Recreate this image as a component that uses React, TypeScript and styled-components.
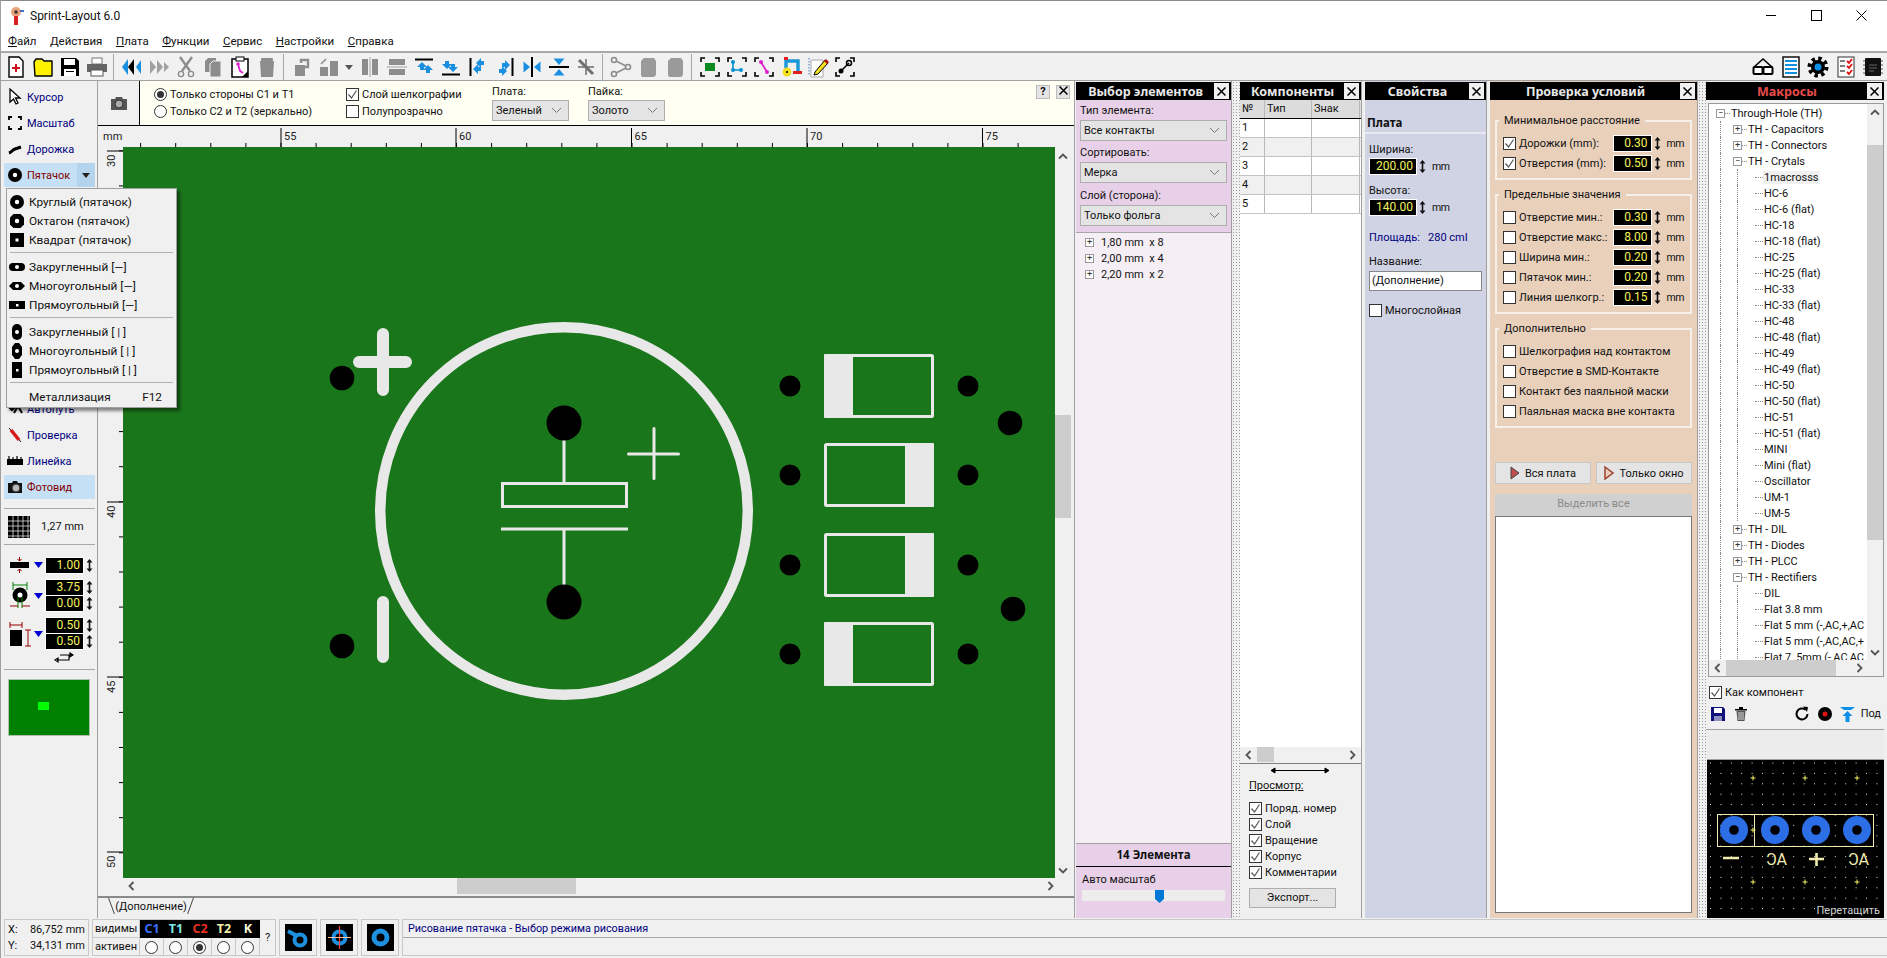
import React from 'react';
import styled, { createGlobalStyle } from 'styled-components';

const Global = createGlobalStyle`
  html, body { margin: 0; padding: 0; background: #f0f0f0; overflow: hidden; }
  * { box-sizing: border-box; }
  body { font: 11px Roboto, Tahoma, sans-serif; color: #111; }
`;

const HEAD_FONT = '"Noto Sans", Tahoma, sans-serif';

const Window = styled('div')`
  position: relative;
  width: 1887px;
  height: 958px;
  overflow: hidden;
  display: flex;
  flex-direction: column;
  background: #f0f0f0;
  border-top: 1px solid #8a8a8a;
  border-left: 1px solid #a0a0a0;
`;

const TitleBar = styled('div')`
  height: 29px;
  background: #fff;
  display: flex;
  align-items: center;
  padding-left: 8px;
  font-size: 12px;
  gap: 5px;
`;
const WinButtons = styled('div')`
  margin-left: auto;
  display: flex;
  align-items: center;
  margin-right: 3px;
`;
const WinButton = styled('div')`
  width: 45px;
  height: 29px;
  display: flex;
  align-items: center;
  justify-content: center;
`;
const MenuBar = styled('div')`
  height: 21px;
  background: #fff;
  display: flex;
  align-items: center;
  padding-left: 7px;
  gap: 13.5px;
  font-size: 11.5px;
  u { text-decoration: underline; text-underline-offset: 1px; }
`;
const Toolbar = styled('div')`
  height: 30px;
  border-top: 2px solid #a9a9a9;
  border-bottom: 1px solid #a0a0a0;
  display: flex;
  align-items: center;
  padding-left: 1px;
  background: #f1f1f1;
`;
const ToolButton = styled('div')<{ $narrow?: boolean }>`
  width: ${(p) => (p.$narrow ? 14 : 27)}px;
  height: 24px;
  display: flex;
  align-items: center;
  justify-content: center;
  flex: none;
`;
const ToolSep = styled('div')`
  width: 1px;
  height: 26px;
  margin: 0 4px 0 3px;
  background: #a8a8a8;
  flex: none;
`;
const ToolRight = styled('div')`
  margin-left: auto;
  display: flex;
  align-items: center;
  gap: 5.5px;
  margin-right: 3px;
`;
const Main = styled('div')`
  height: 837px;
  display: flex;
`;

/* left tool column */
const LeftCol = styled('div')`
  width: 97px;
  flex: none;
  border-right: 1px solid #a0a0a0;
  padding: 4px 2px 0 3px;
  display: flex;
  flex-direction: column;
`;
const ToolRow = styled('div')<{ $active?: boolean; $gap?: number }>`
  height: 24px;
  margin-bottom: 2px;
  margin-top: ${(p) => p.$gap || 0}px;
  display: flex;
  align-items: center;
  gap: 4px;
  padding-left: 3px;
  font-size: 11px;
  color: ${(p) => (p.$active ? '#800000' : '#000080')};
  background: ${(p) => (p.$active ? '#c5dff4' : 'transparent')};
`;
const ToolDrop = styled('div')`
  margin-left: auto;
  width: 18px;
  height: 100%;
  background: #b4d3ec;
  display: flex;
  align-items: center;
  justify-content: center;
`;
const Divider = styled('div')<{ $m?: string }>`
  height: 1px;
  background: #a8a8a8;
  margin: ${(p) => p.$m || '0'};
`;
const GridRow = styled('div')`
  height: 35px;
  display: flex;
  align-items: center;
  gap: 11px;
  padding-left: 4px;
`;
const ParamRow = styled('div')<{ $mt: number; $h?: number }>`
  display: flex;
  align-items: center;
  margin-top: ${(p) => p.$mt}px;
  height: ${(p) => p.$h || 16}px;
`;
const ParamIcon = styled('div')`
  width: 42px;
  display: flex;
  align-items: center;
`;
const ParamFields = styled('div')`
  display: flex;
  flex-direction: column;
  gap: 1px;
`;
const FieldLine = styled('div')`
  display: flex;
  align-items: center;
  gap: 3px;
`;
const NumField = styled('div')<{ $w?: number }>`
  width: ${(p) => p.$w || 37}px;
  flex: none;
  height: 15px;
  background: #000;
  color: #f4f45a;
  text-align: right;
  padding-right: 3px;
  font-size: 12px;
  line-height: 15px;
  outline: 1px solid #fff;
`;
const SwapRow = styled('div')`
  height: 14px;
  margin-top: 3px;
  padding-left: 50px;
`;
const Preview = styled('div')`
  margin: 9px 0 0 4px;
  width: 82px;
  height: 57px;
  background: #008000;
  border: 1px solid #b0c0b0;
  display: flex;
  align-items: center;
  justify-content: center;
`;
const PreviewDot = styled('div')`
  width: 11px;
  height: 8px;
  background: #00ff00;
  margin: 0 12px 4px 0;
`;

/* centre */
const Centre = styled('div')`
  width: 977px;
  flex: none;
  display: flex;
  flex-direction: column;
  border-right: 1px solid #a0a0a0;
`;
const OptionsBar = styled('div')`
  height: 45px;
  background: #fffff3;
  border-bottom: 1px solid #000;
  display: flex;
  align-items: stretch;
`;
const CameraCell = styled('div')`
  width: 42px;
  background: #f0f0f0;
  border-right: 1px solid #000;
  display: flex;
  align-items: center;
  justify-content: center;
`;
const OptCol = styled('div')<{ $w: number; $pl?: number }>`
  width: ${(p) => p.$w}px;
  padding-left: ${(p) => p.$pl || 0}px;
  display: flex;
  flex-direction: column;
  justify-content: center;
  gap: 3px;
`;
const OptSelectCol = styled('div')`
  width: 96px;
  display: flex;
  flex-direction: column;
  padding-top: 4px;
`;
const OptLine = styled('label')`
  display: flex;
  align-items: center;
  gap: 3px;
  height: 14px;
  white-space: nowrap;
`;
const OptClose = styled('div')`
  margin-left: auto;
  margin-top: 4px;
  margin-right: 4px;
  display: flex;
  gap: 6px;
`;
const SmallBtn = styled('div')`
  width: 14px;
  height: 14px;
  background: #e4e4e4;
  border: 1px solid #bbb;
  font-size: 11px;
  font-weight: 700;
  line-height: 12px;
  text-align: center;
`;
const Mark = styled('span')`
  width: 13px;
  height: 13px;
  flex: none;
  border: 1px solid #333;
  background: #fff;
  display: inline-flex;
  align-items: center;
  justify-content: center;
`;
const Radio = styled('span')<{ $on?: boolean }>`
  width: 13px;
  height: 13px;
  flex: none;
  border-radius: 50%;
  border: 1px solid #333;
  background: #fff;
  display: inline-flex;
  align-items: center;
  justify-content: center;
  &::after {
    content: '';
    width: 7px;
    height: 7px;
    border-radius: 50%;
    background: ${(p) => (p.$on ? '#333' : 'transparent')};
  }
`;
const SelectBox = styled('div')<{ $w?: number; $mt?: number }>`
  width: ${(p) => (p.$w ? `${p.$w}px` : 'auto')};
  height: 21px;
  margin-top: ${(p) => p.$mt || 0}px;
  background: #e4e4e4;
  border: 1px solid #adadad;
  display: flex;
  align-items: center;
  padding: 0 6px 0 3px;
  justify-content: space-between;
`;
const RulerRow = styled('div')`
  height: 21px;
  flex: none;
`;
const CanvasRow = styled('div')`
  height: 731px;
  display: flex;
`;
const VScroll = styled('div')`
  width: 20px;
  background: #f0f0f0;
  display: flex;
  flex-direction: column;
  align-items: flex-start;
  padding-top: 1px;
`;
const ScrollArrow = styled('div')<{ $w?: number; $ml?: number; $auto?: boolean }>`
  width: ${(p) => p.$w || 16}px;
  height: 16px;
  margin-left: ${(p) => p.$ml || 0}px;
  margin-top: ${(p) => (p.$auto ? 'auto' : '0')};
  display: flex;
  align-items: center;
  justify-content: center;
  flex: none;
`;
const VThumb = styled('div')`
  width: 16px;
  height: 103px;
  margin-top: 251px;
  margin-bottom: auto;
  background: #cdcdcd;
`;
const HScroll = styled('div')`
  height: 20px;
  display: flex;
  align-items: flex-start;
  padding-left: 25px;
  border-bottom: 2px solid #8a8a8a;
  flex: none;
`;
const HThumb = styled('div')<{ $w: number; $ml: number; $h?: number }>`
  width: ${(p) => p.$w}px;
  height: ${(p) => p.$h || 16}px;
  margin-left: ${(p) => p.$ml}px;
  background: #cdcdcd;
  flex: none;
`;
const TabRow = styled('div')`
  height: 19px;
  padding-left: 11px;
  display: flex;
  align-items: flex-start;
`;
const TabLabel = styled('div')`
  position: relative;
  width: 84px;
  height: 16px;
  text-align: center;
  line-height: 18px;
  font-size: 11px;
  &::before, &::after {
    content: '';
    position: absolute;
    top: 0;
    bottom: 0;
    width: 1px;
    background: #444;
  }
  &::before { left: 2px; transform: skewX(20deg); }
  &::after { right: 2px; transform: skewX(-20deg); }
`;

/* panels */
const StripDots = styled('div')`
  width: 8px;
  flex: none;
  background-image: radial-gradient(#9a9a9a 0.7px, transparent 0.8px);
  background-size: 3px 3px;
`;
const Panel = styled('div')<{ $w: number; $ml?: number; $bg?: string; $last?: boolean }>`
  width: ${(p) => p.$w}px;
  flex: none;
  margin-left: ${(p) => p.$ml || 0}px;
  background: ${(p) => p.$bg || '#f0f0f0'};
  border-right: ${(p) => (p.$last ? 'none' : '1px solid #a0a0a0')};
  display: flex;
  flex-direction: column;
  height: 837px;
`;
const PanelHead = styled('div')<{ $c?: string }>`
  flex: none;
  height: 18px;
  margin-top: 1px;
  background: #000;
  color: ${(p) => p.$c || '#e8e8e8'};
  font: 700 12.5px ${HEAD_FONT};
  display: flex;
  align-items: center;
  justify-content: center;
  position: relative;
  padding-right: 16px;
  white-space: nowrap;
`;
const HeadClose = styled('div')`
  position: absolute;
  right: 2px;
  top: 1px;
  width: 15px;
  height: 16px;
  background: #f0f0f0;
  display: flex;
  align-items: center;
  justify-content: center;
`;
const PinkTop = styled('div')`
  height: 133px;
  background: #e8d1e8;
  border-bottom: 1px solid #a8a8a8;
  padding: 2px 4px 0 4px;
  flex: none;
  line-height: 17px;
`;
const PinkLabel = styled('div')<{ $mt: number }>`
  margin-top: ${(p) => p.$mt}px;
`;
const PinkList = styled('div')`
  flex: 1;
  background: #f5eef5;
  padding-top: 1px;
`;
const SizeRow = styled('div')`
  height: 16px;
  display: flex;
  align-items: center;
  padding-left: 9px;
  gap: 7px;
`;
const SizeText = styled('span')`
  white-space: pre;
`;
const PlusBox = styled('span')`
  width: 9px;
  height: 9px;
  flex: none;
  border: 1px solid #999;
  background: #fff;
  font-size: 9px;
  line-height: 7px;
  text-align: center;
  color: #333;
`;
const PinkCount = styled('div')`
  height: 24px;
  border-top: 1px solid #a0a0a0;
  border-bottom: 1px solid #000;
  background: #e8d1e8;
  text-align: center;
  font: 700 11.5px/22px ${HEAD_FONT};
  flex: none;
`;
const PinkZoom = styled('div')`
  height: 51px;
  background: #e8d1e8;
  flex: none;
  padding: 6px 6px;
`;
const Slider = styled('div')`
  margin-top: 4px;
  height: 11px;
  background: #ededed;
  display: flex;
  align-items: stretch;
`;
const SliderThumb = styled('div')`
  width: 9px;
  height: 13px;
  margin-left: 73px;
  background: #0078d7;
  clip-path: polygon(0 0, 100% 0, 100% 70%, 50% 100%, 0 70%);
`;

const TableHead = styled('div')`
  display: grid;
  grid-template-columns: 25px 47px 48px;
  height: 19px;
  background: #dcdcdc;
  border-bottom: 1px solid #000;
  line-height: 18px;
  flex: none;
`;
const Cell = styled('div')`
  padding-left: 2px;
  border-right: 1px solid #b8b8b8;
`;
const TableRow = styled('div')<{ $alt: boolean }>`
  display: grid;
  grid-template-columns: 25px 47px 48px;
  height: 19px;
  background: ${(p) => (p.$alt ? '#f0f0f0' : '#fff')};
  border-bottom: 1px solid #c4c4c4;
  line-height: 18px;
  flex: none;
`;
const TableFill = styled('div')`
  flex: 1;
  background: #fff;
`;
const HScrollSmall = styled('div')`
  height: 17px;
  flex: none;
  border-bottom: 1px solid #808080;
  display: flex;
  align-items: flex-start;
`;
const ViewBox = styled('div')`
  height: 154px;
  flex: none;
  padding: 2px 0 0 9px;
`;
const ViewTitle = styled('div')`
  text-decoration: underline;
  margin: 4px 0 8px;
`;
const CheckLine = styled('div')`
  height: 16px;
  display: flex;
  align-items: center;
  gap: 3px;
  white-space: nowrap;
`;
const PlainBtn = styled('div')`
  width: 87px;
  height: 20px;
  margin-top: 8px;
  background: #e4e4e4;
  border: 1px solid #adadad;
  text-align: center;
  line-height: 17px;
  word-spacing: 1px;
`;

const PropTitle = styled('div')`
  height: 34px;
  padding: 16px 0 0 2px;
  font: 700 11.5px/14px ${HEAD_FONT};
  border-bottom: 2px solid #e8e8f0;
  flex: none;
`;
const PropLabel = styled('div')<{ $mt: number; $c?: string }>`
  margin: ${(p) => p.$mt}px 0 0 4px;
  line-height: 15px;
  color: ${(p) => p.$c || '#111'};
  white-space: pre;
`;
const PropValue = styled('div')`
  display: flex;
  align-items: center;
  margin: 2px 0 0 5px;
  gap: 3px;
  height: 14px;
  span { margin-left: 3px; font-size: 10.5px; letter-spacing: -0.5px; }
`;
const NameInput = styled('div')`
  margin: 2px 4px 0 4px;
  height: 20px;
  background: #fff;
  border: 1px solid #888;
  line-height: 18px;
  padding-left: 2px;
`;
const PropCheck = styled('div')`
  display: flex;
  align-items: center;
  gap: 3px;
  margin: 13px 0 0 4px;
`;

const CheckBody = styled('div')`
  flex: 1;
  display: flex;
  flex-direction: column;
  padding: 14px 5px 5px 5px;
`;
const Group = styled('fieldset')`
  margin: 0 0 8px 0;
  padding: 5px 5px 5px 6px;
  border: 2px solid #f6f0ea;
  outline: none;
  min-width: 0;
  legend {
    margin-left: -4px;
    padding: 0 5px;
    line-height: 14px;
    font-size: 11px;
  }
`;
const CheckRow = styled('div')`
  height: 20px;
  display: flex;
  align-items: center;
  gap: 3px;
  white-space: nowrap;
  b { margin-left: auto; font-weight: 400; display: flex; align-items: center; gap: 3px; }
  i { font-style: normal; margin-left: 3px; margin-right: 1px; font-size: 10.5px; letter-spacing: -0.5px; }
`;
const RunRow = styled('div')`
  display: flex;
  gap: 5px;
  margin-top: 26px;
`;
const RunBtn = styled('div')`
  flex: 1;
  height: 22px;
  background: #e4e4e4;
  border: 1px solid #c8c8c8;
  display: flex;
  align-items: center;
  justify-content: center;
  gap: 5px;
`;
const SelectAll = styled('div')`
  height: 22px;
  margin-top: 10px;
  background: #d0d0d0;
  color: #8a8a8a;
  text-align: center;
  line-height: 20px;
  flex: none;
`;
const WhiteList = styled('div')`
  flex: 1;
  background: #fff;
  border: 1px solid #777;
`;

const TreeBox = styled('div')`
  height: 574px;
  margin: 3px 0 0 2px;
  background: #fff;
  border: 1px solid #9a9a9a;
  overflow: hidden;
  flex: none;
  display: flex;
  flex-direction: column;
`;
const TreeInner = styled('div')`
  flex: 1;
  min-height: 0;
  display: flex;
`;
const TreeList = styled('div')`
  flex: 1;
  min-width: 0;
  overflow: hidden;
  padding: 1px 0 0 7px;
`;
const TreeRow = styled('div')`
  height: 16px;
  display: flex;
  align-items: center;
  white-space: nowrap;
`;
const Guide = styled('span')<{ $w: number; $ml?: number }>`
  width: ${(p) => p.$w}px;
  margin-left: ${(p) => p.$ml || 0}px;
  height: 16px;
  flex: none;
  border-left: 1px dotted #888;
`;
const Stub = styled('span')<{ $w: number }>`
  width: ${(p) => p.$w}px;
  flex: none;
  border-top: 1px dotted #888;
`;
const TreeLabel = styled('span')<{ $sel?: boolean }>`
  background: ${(p) => (p.$sel ? '#f0f0f0' : 'transparent')};
  padding: 0 1px;
`;
const TreeScroll = styled('div')`
  width: 16px;
  flex: none;
  background: #f0f0f0;
  display: flex;
  flex-direction: column;
`;
const TreeThumb = styled('div')`
  margin-top: 25px;
  height: 395px;
  background: #cdcdcd;
`;
const TreeHScroll = styled('div')`
  height: 16px;
  background: #f0f0f0;
  flex: none;
  display: flex;
  align-items: center;
`;
const AsComponent = styled('div')`
  display: flex;
  align-items: center;
  gap: 3px;
  margin: 8px 0 0 3px;
  height: 15px;
  flex: none;
`;
const MacroTools = styled('div')`
  display: flex;
  align-items: center;
  margin-top: 1px;
  padding-left: 4px;
  padding-bottom: 3px;
  flex: none;
  border-bottom: 1px solid #a0a0a0;
  height: 29px;
`;
const MacroGap = styled('span')`
  width: 8px;
`;
const MacroPush = styled('div')`
  margin-left: auto;
  display: flex;
  align-items: center;
  gap: 8px;
  padding-right: 3px;
`;
const PushLabel = styled('span')`
  margin-left: -3px;
`;
const GreyStrip = styled('div')`
  height: 30px;
  flex: none;
  margin-left: 1px;
  border-bottom: 1px solid #a0a0a0;
  background: #ececec;
`;
const PreviewBlack = styled('div')`
  flex: 1;
  margin-left: 1px;
  background: #000;
  position: relative;
  overflow: hidden;
`;
const DragHint = styled('div')`
  position: absolute;
  right: 4px;
  bottom: 1px;
  color: #d0d0d0;
  font-size: 11px;
`;

/* status bar */
const StatusBar = styled('div')`
  flex: 1;
  display: flex;
  padding: 1px 0 0 3px;
  gap: 3px;
`;
const CoordBox = styled('div')`
  width: 85px;
  height: 37px;
  border: 1px solid #c8c8c8;
  padding: 2px 3px;
  line-height: 16px;
  font-size: 11px;
  span { display: flex; justify-content: space-between; }
  i { font-style: normal; }
`;
const LayerBox = styled('div')`
  width: 184px;
  height: 37px;
  border: 1px solid #c8c8c8;
  display: grid;
  grid-template-columns: 47px repeat(5, 24px) 1fr;
  grid-template-rows: 18px 18px;
  line-height: 17px;
  font-size: 11px;
`;
const LayerName = styled('div')<{ $last?: boolean }>`
  padding-left: 2px;
  border-right: 1px solid #c8c8c8;
  border-bottom: ${(p) => (p.$last ? 'none' : '1px solid #c8c8c8')};
`;
const LayerCell = styled('div')<{ $c: string }>`
  background: #000;
  color: ${(p) => p.$c};
  text-align: center;
  font: 700 12.5px/17px ${HEAD_FONT};
`;
const LayerRadio = styled('div')`
  display: flex;
  align-items: center;
  justify-content: center;
  border-right: 1px solid #c8c8c8;
`;
const LayerHelp = styled('div')`
  grid-column: 7;
  grid-row: 1 / 3;
  text-align: center;
  line-height: 36px;
`;
const SnapBox = styled('div')`
  width: 38px;
  height: 37px;
  border: 1px solid #c8c8c8;
  display: flex;
  align-items: center;
  justify-content: center;
`;
const MessageBox = styled('div')`
  flex: 1;
  height: 37px;
  border: 1px solid #c8c8c8;
  border-right: none;
  color: #000080;
  font-size: 10.8px;
`;
const MessageText = styled('div')`
  height: 18px;
  padding-left: 5px;
  line-height: 18px;
  border-bottom: 1px solid #a8a8a8;
`;

/* popup */
const PopMenu = styled('div')`
  position: absolute;
  left: 5px;
  top: 187px;
  width: 171px;
  height: 220px;
  background: #f0f0f0;
  border: 1px solid #a0a0a0;
  box-shadow: 3px 3px 3px rgba(0, 0, 0, 0.45);
  padding: 3px 2px;
  font-size: 11.8px;
`;
const PopItem = styled('div')`
  height: 19px;
  display: flex;
  align-items: center;
`;
const PopIcon = styled('span')`
  width: 16px;
  margin-right: 4px;
  display: flex;
  align-items: center;
  justify-content: center;
  flex: none;
`;
const PopSep = styled('div')`
  height: 1px;
  background: #b0b0b0;
  margin: 3px 1px 4px 1px;
`;
const PopKey = styled('span')`
  margin-left: auto;
  margin-right: 12px;
`;

const Chevron = styled('svg')`
  width: 11px;
  height: 7px;
  flex: none;
`;
const Drawing = styled('svg')`
  display: block;
  flex: none;
`;
const BoardSvg = styled(Drawing)`
  background: #1a761a;
`;

const Ic = ({ children, w = 22, h = 22 }: { children: React.ReactNode; w?: number; h?: number }) => (
  <Drawing width={w} height={h} viewBox={`0 0 ${w} ${h}`}>
    {children}
  </Drawing>
);

const Chev = () => (
  <Chevron viewBox="0 0 11 7">
    <path d="M1 1l4.5 4.5L10 1" fill="none" stroke="#777" strokeWidth="1" />
  </Chevron>
);
const Tick = () => (
  <svg width="11" height="11" viewBox="0 0 11 11">
    <path d="M1.5 5.5l3 3.5 5-7.5" fill="none" stroke="#555" strokeWidth="1.2" />
  </svg>
);
const Box = ({ on }: { on?: boolean }) => <Mark>{on && <Tick />}</Mark>;
const Spin = () => (
  <Drawing width="7" height="13" viewBox="0 0 7 13">
    <path d="M3.5 0L6.5 3.5H4.3V9.5H6.5L3.5 13L.5 9.5H2.7V3.5H.5z" fill="#111" />
  </Drawing>
);
const CloseX = () => (
  <svg width="9" height="9" viewBox="0 0 9 9">
    <path d="M.5.5l8 8M8.5.5l-8 8" stroke="#000" strokeWidth="1.5" />
  </svg>
);
const ArrowL = () => (
  <svg width="7" height="10" viewBox="0 0 7 10"><path d="M5.5 1L1.5 5l4 4" fill="none" stroke="#555" strokeWidth="1.8" /></svg>
);
const ArrowR = () => (
  <svg width="7" height="10" viewBox="0 0 7 10"><path d="M1.5 1l4 4-4 4" fill="none" stroke="#555" strokeWidth="1.8" /></svg>
);
const ArrowU = () => (
  <svg width="10" height="7" viewBox="0 0 10 7"><path d="M1 5.5l4-4 4 4" fill="none" stroke="#555" strokeWidth="1.8" /></svg>
);
const ArrowD = () => (
  <svg width="10" height="7" viewBox="0 0 10 7"><path d="M1 1.5l4 4 4-4" fill="none" stroke="#555" strokeWidth="1.8" /></svg>
);
const BlueDrop = () => (
  <svg width="9" height="6" viewBox="0 0 9 6"><path d="M0 0h9L4.5 6z" fill="#0000d0" /></svg>
);

const G = '#8d8d8d';
const B = '#1a8fe0';
const alignIcon = (rot: number) => (
  <Ic>
    <g transform={`rotate(${rot} 11 11)`}>
      <path d="M2 3.5h18" stroke="#000" strokeWidth="2" />
      <path d="M9 6l-5 5h3v3h4v-3h3z" fill={B} />
      <path d="M15 10l-5 5h3v3h4v-3h3z" fill={B} transform="translate(0 -1)" />
    </g>
  </Ic>
);
const barsIcon = (vertical: boolean) => (
  <Ic>
    <g transform={vertical ? '' : 'rotate(90 11 11)'}>
      <path d="M11 1v20" stroke="#a0a0a0" strokeWidth="1" />
      <rect x="3" y="3" width="6" height="16" fill={G} />
      <rect x="13" y="3" width="6" height="16" fill={G} />
    </g>
  </Ic>
);
const pinch = (vertical: boolean) => (
  <Ic>
    <g transform={vertical ? 'rotate(90 11 11)' : ''}>
      <path d="M11 1v20" stroke="#000" strokeWidth="2" />
      <path d="M9 11L2.5 5.5v11zM13 11l6.5-5.5v11z" fill={B} />
    </g>
  </Ic>
);
const corners = (children: React.ReactNode) => (
  <Ic>
    <path d="M2 6V2h4M16 2h4v4M20 16v4h-4M6 20H2v-4" fill="none" stroke="#000" strokeWidth="1.6" />
    {children}
  </Ic>
);

const TOOLBAR: (React.ReactNode | null)[] = [
  <Ic key="new"><path d="M4 1h10l4 4v16H4z" fill="#fff" stroke="#000" strokeWidth="1.4" /><path d="M11 8v8M7 12h8" stroke="#d01020" strokeWidth="2" /></Ic>,
  <Ic key="open"><path d="M2 6l2-3h6l2 2h8v15H3z" fill="#fff200" stroke="#000" strokeWidth="1.4" strokeLinejoin="round" /></Ic>,
  <Ic key="save"><path d="M2 2h15l3 3v15H2z" fill="#000" /><rect x="5" y="3" width="11" height="6" fill="#fff" /><rect x="5" y="13" width="12" height="7" fill="#fff" /><rect x="7" y="15" width="8" height="1" fill="#000" /></Ic>,
  <Ic key="print"><rect x="6" y="2" width="10" height="6" fill="#fff" stroke="#777" /><rect x="1" y="8" width="20" height="8" fill="#666" /><rect x="5" y="14" width="12" height="6" fill="#fff" stroke="#555" /></Ic>,
  null,
  <Ic key="back"><path d="M7 3L1 11l6 8z" fill={B} /><path d="M13 3l-6 8 6 8z" fill="#000" /><path d="M15 11l5-7v14z" fill={B} /></Ic>,
  <Ic key="fwd"><path d="M2 4l6 7-6 7zM9 4l6 7-6 7zM16 6l5 5-5 5z" fill="#a0a0a0" /></Ic>,
  <Ic key="cut"><path d="M5 1l10 14M17 1L7 15" stroke={G} strokeWidth="2.4" /><circle cx="6" cy="18" r="2.6" fill="none" stroke={G} strokeWidth="1.4" /><circle cx="16" cy="18" r="2.6" fill="none" stroke={G} strokeWidth="1.4" /></Ic>,
  <Ic key="copy"><path d="M3 5l3-3h8v14H3z" fill={G} /><path d="M8 8l3-3h8v16H8z" fill={G} stroke="#f0f0f0" /></Ic>,
  <Ic key="paste"><rect x="3" y="3" width="16" height="18" fill="#fff" stroke="#000" strokeWidth="1.5" /><rect x="7" y="1" width="8" height="4" fill="#fff" stroke="#000" /><path d="M9 8l2 7 3 2" fill="none" stroke="#e020d0" strokeWidth="1.8" /><circle cx="9" cy="8" r="1.8" fill="#e020d0" /><path d="M13 21l6-6v6z" fill="#000" /></Ic>,
  <Ic key="del"><path d="M4 5h14l-1 16H5z" fill={G} /><rect x="5" y="2" width="12" height="3" rx="1" fill={G} /></Ic>,
  null,
  <Ic key="quest"><path d="M4 9h10v11H4z" fill={G} /><path d="M10 7V4h7v7h-3" fill="none" stroke={G} strokeWidth="2.4" /></Ic>,
  <Ic key="group"><path d="M2 11h8v9H2zM12 5h8v15h-8z" fill={G} /><path d="M3 8l5-5" stroke={G} strokeWidth="1.6" /></Ic>,
  <Ic key="drop" w={12} h={22}><path d="M2 9h8l-4 5z" fill="#555" /></Ic>,
  barsIcon(true),
  barsIcon(false),
  alignIcon(0),
  alignIcon(180),
  alignIcon(-90),
  alignIcon(90),
  pinch(false),
  pinch(true),
  <Ic key="cross"><path d="M11 3v16M3 11h16" stroke={G} strokeWidth="2" /><path d="M11 11L4 4M11 11l7 7" stroke="#707070" strokeWidth="3" /></Ic>,
  null,
  <Ic key="node"><circle cx="4" cy="4" r="2.5" fill="none" stroke={G} strokeWidth="1.6" /><circle cx="4" cy="18" r="2.5" fill="none" stroke={G} strokeWidth="1.6" /><circle cx="18" cy="11" r="2.5" fill="none" stroke={G} strokeWidth="1.6" /><path d="M6 5l10 5M6 17l10-5" stroke={G} strokeWidth="1.6" /></Ic>,
  <Ic key="dup1"><path d="M4 5l3-3h10l2 3v14l-2 2H5l-1-2z" fill="#9a9a9a" /></Ic>,
  <Ic key="dup2"><path d="M4 5l3-3h10l2 3v14l-2 2H5l-1-2z" fill="#9a9a9a" /></Ic>,
  null,
  corners(<rect x="6" y="7" width="10" height="8" fill="#0a8a20" />),
  corners(<g><path d="M7 6v8h8" fill="none" stroke="#0090d0" strokeWidth="1.6" /><circle cx="7" cy="6" r="2" fill="#0090d0" /><circle cx="7" cy="14" r="2" fill="#0090d0" /><circle cx="15" cy="14" r="2" fill="#0090d0" /></g>),
  corners(<g><path d="M8 6l6 10" stroke="#e020d0" strokeWidth="1.8" /><circle cx="8" cy="6" r="2" fill="#e020d0" /><circle cx="14" cy="16" r="2" fill="#e020d0" /></g>),
  <Ic key="mix"><path d="M6 18V5h12v12" fill="none" stroke="#1898d8" strokeWidth="3.4" /><rect x="4" y="1" width="4" height="3" fill="#e02020" /><rect x="13" y="15" width="9" height="3" fill="#e02020" /><circle cx="7" cy="16" r="4.5" fill="#f4e020" /><circle cx="7" cy="16" r="1" fill="#000" /></Ic>,
  <Ic key="pen"><path d="M2 2v18" stroke="#4080d0" strokeDasharray="1.5 1.5" /><path d="M4 4h12v17H4z" fill="#fff" stroke="#aaa" /><path d="M8 16l10-12 3 3-10 11-4 1z" fill="#f4e020" stroke="#000" /><path d="M17 5l2-2 3 3-2 2z" fill="#b01010" /></Ic>,
  corners(<g><path d="M7 15L15 7" stroke="#000" strokeWidth="1.6" /><circle cx="15" cy="7" r="2.5" fill="none" stroke="#000" strokeWidth="1.5" /><circle cx="7" cy="15" r="2.5" fill="#000" /></g>),
];

const MENU = ['Файл', 'Действия', 'Плата', 'Функции', 'Сервис', 'Настройки', 'Справка'];

const padRound = (
  <Ic w={16} h={16}><circle cx="8" cy="8" r="7" fill="#000" /><circle cx="8" cy="8" r="2.2" fill="#fff" /></Ic>
);
const padOct = (
  <Ic w={16} h={16}><path d="M4.5 1h7L15 4.500v7L11.500 15h-7L1 11.500v-7z" fill="#000" /><circle cx="8" cy="8" r="2.200" fill="#fff" /></Ic>
);
const padSquare = (
  <Ic w={16} h={16}><rect x="1" y="1" width="14" height="14" fill="#000" /><rect x="6.500" y="6.500" width="3" height="3" fill="#fff" /></Ic>
);
const longRound = (
  <Ic w={18} h={12}><rect x="1" y="2" width="16" height="8" rx="4" fill="#000" /><circle cx="9" cy="6" r="2" fill="#fff" /></Ic>
);
const longPoly = (
  <Ic w={18} h={12}><path d="M5 2h8l4 4-4 4H5L1 6z" fill="#000" /><circle cx="9" cy="6" r="2" fill="#fff" /></Ic>
);
const longRect = (
  <Ic w={18} h={12}><rect x="1" y="2" width="16" height="8" fill="#000" /><rect x="8" y="5" width="2.500" height="2.500" fill="#fff" /></Ic>
);
const tallRound = (
  <Ic w={12} h={18}><rect x="1" y="1" width="10" height="16" rx="5" fill="#000" /><circle cx="6" cy="9" r="2" fill="#fff" /></Ic>
);
const tallPoly = (
  <Ic w={12} h={18}><path d="M1 5l3-4h4l3 4v8l-3 4H4l-3-4z" fill="#000" /><circle cx="6" cy="9" r="2" fill="#fff" /></Ic>
);
const tallRect = (
  <Ic w={12} h={18}><rect x="1" y="1" width="10" height="16" fill="#000" /><rect x="5" y="8" width="2.500" height="2.500" fill="#fff" /></Ic>
);

const POP: ([React.ReactNode, string] | null)[] = [
  [padRound, 'Круглый (пятачок)'],
  [padOct, 'Октагон (пятачок)'],
  [padSquare, 'Квадрат (пятачок)'],
  null,
  [longRound, 'Закругленный [—]'],
  [longPoly, 'Многоугольный [—]'],
  [longRect, 'Прямоугольный [—]'],
  null,
  [tallRound, 'Закругленный [ | ]'],
  [tallPoly, 'Многоугольный [ | ]'],
  [tallRect, 'Прямоугольный [ | ]'],
  null,
];

type Leaf = { t: string; k: 'root' | 'open' | 'closed' | 'leaf'; sel?: boolean };
const hcNames = ['HC-6', 'HC-6 (flat)', 'HC-18', 'HC-18 (flat)', 'HC-25', 'HC-25 (flat)', 'HC-33', 'HC-33 (flat)', 'HC-48', 'HC-48 (flat)', 'HC-49', 'HC-49 (flat)', 'HC-50', 'HC-50 (flat)', 'HC-51', 'HC-51 (flat)', 'MINI', 'Mini (flat)', 'Oscillator', 'UM-1', 'UM-5'];
const TREE: Leaf[] = [
  { t: 'Through-Hole (TH)', k: 'root' },
  { t: 'TH - Capacitors', k: 'closed' },
  { t: 'TH - Connectors', k: 'closed' },
  { t: 'TH - Crytals', k: 'open' },
  { t: '1macrosss', k: 'leaf', sel: true },
  ...hcNames.map((t): Leaf => ({ t, k: 'leaf' })),
  { t: 'TH - DIL', k: 'closed' },
  { t: 'TH - Diodes', k: 'closed' },
  { t: 'TH - PLCC', k: 'closed' },
  { t: 'TH - Rectifiers', k: 'open' },
  { t: 'DIL', k: 'leaf' },
  { t: 'Flat 3.8 mm', k: 'leaf' },
  { t: 'Flat 5 mm (-,AC,+,AC', k: 'leaf' },
  { t: 'Flat 5 mm (-,AC,AC,+', k: 'leaf' },
  { t: 'Flat 7, 5mm (-,AC,AC', k: 'leaf' },
];

const HRuler = () => {
  const ticks = [];
  for (let i = 0; i < 27; i++) ticks.push(281 + (i - 5) * 35.1);
  return (
    <Drawing width="977" height="21" viewBox="98 126 977 21">
      <text x="103" y="140" fontSize="11" fontFamily="Roboto" fill="#222">mm</text>
      {ticks.filter((x) => x > 125 && x < 1056).map((x) => (
        <path key={x} d={`M${x} 143v4`} stroke="#000" />
      ))}
      {[[281, 55], [456, 60], [631.500, 65], [807, 70], [982.500, 75]].map(([x, n]) => (
        <g key={n}>
          <path d={`M${x} 128v19`} stroke="#000" />
          <text x={x + 3} y="140" fontSize="11" fontFamily="Roboto" fill="#222">{n}</text>
        </g>
      ))}
    </Drawing>
  );
};

const VRuler = () => {
  const ticks = [];
  for (let i = 0; i < 22; i++) ticks.push(150.800 + i * 35.1);
  return (
    <Drawing width="25" height="731" viewBox="98 147 25 731">
      {ticks.map((y) => <path key={y} d={`M119 ${y}h4`} stroke="#000" />)}
      {[[151, 30], [326.500, 35], [502, 40], [677, 45], [852, 50]].map(([y, n]) => (
        <g key={n}>
          <path d={`M107 ${y}h16`} stroke="#000" />
          <text transform={`translate(115 ${y + 16}) rotate(-90)`} fontSize="11" fontFamily="Roboto" fill="#222">{n}</text>
        </g>
      ))}
    </Drawing>
  );
};

const Board = () => {
  const W = '#e8e8e8';
  const smd = [
    { y: 354, left: true },
    { y: 443, left: false },
    { y: 533, left: false },
    { y: 622, left: true },
  ];
  return (
    <BoardSvg width="932" height="731" viewBox="123 147 932 731">
      <circle cx="564" cy="511" r="183.800" fill="none" stroke={W} strokeWidth="10.500" />
      <path d="M383 334v56M359 362h47M383 602v55" stroke={W} strokeWidth="12" strokeLinecap="round" />
      <path d="M628.500 454h50M654 428.500v50" stroke={W} strokeWidth="3" strokeLinecap="round" />
      <rect x="502.500" y="483.500" width="124" height="23" fill="none" stroke={W} strokeWidth="3" />
      <path d="M501 529h127M564 423v60M564 529v73" stroke={W} strokeWidth="3" />
      <circle cx="564" cy="423" r="17.500" fill="#000" />
      <circle cx="564" cy="602" r="17.500" fill="#000" />
      <circle cx="342" cy="378" r="12.300" fill="#000" />
      <circle cx="342" cy="646" r="12.300" fill="#000" />
      {smd.map(({ y, left }) => (
        <g key={y}>
          <rect x="825.500" y={y + 1.500} width="107" height="61" fill="none" stroke={W} strokeWidth="3" rx="1" />
          <rect x={left ? 824 : 905} y={y} width="29" height="64" fill={W} rx="1" />
          <circle cx="790" cy={y + 32} r="10.500" fill="#000" />
          <circle cx="968" cy={y + 32} r="10.500" fill="#000" />
        </g>
      ))}
      <circle cx="1010" cy="423" r="12.300" fill="#000" />
      <circle cx="1013" cy="609" r="12.300" fill="#000" />
    </BoardSvg>
  );
};

const MacroPreview = () => {
  const dots = [];
  for (let x = 0; x < 18; x++) for (let y = 0; y < 16; y++) dots.push([3 + x * 10.400, 2.500 + y * 10.400]);
  const pads = [27, 68, 109, 150];
  return (
    <Drawing width="177" height="160" viewBox="0 0 177 160">
      {dots.map(([x, y]) => <rect key={`${x}-${y}`} x={x} y={y} width="1" height="1" fill="#e0e0e0" />)}
      {[46, 98, 150].map((x) => [18, 70, 122].map((y) => (
        <path key={`${x}${y}`} d={`M${x - 2.500} ${y}h5M${x} ${y - 2.500}v5`} stroke="#f4f460" />
      )))}
      <rect x="10.500" y="54.500" width="156" height="32" fill="none" stroke="#f0ecb0" />
      <path d="M47.500 54v32" stroke="#f0ecb0" />
      {pads.map((x) => (
        <g key={x}>
          <circle cx={x} cy="70" r="14" fill="#2c6ee6" />
          <circle cx={x} cy="70" r="4.800" fill="#000" />
        </g>
      ))}
      <path d="M16 98h16M102 99h15M109.500 93v13" stroke="#f0ecb0" strokeWidth="2.600" />
      <text transform="translate(80 105) scale(-1 1)" fontSize="16" fontFamily="Roboto" fill="#f0ecb0">AC</text>
      <text transform="translate(162 105) scale(-1 1)" fontSize="16" fontFamily="Roboto" fill="#f0ecb0">AC</text>
    </Drawing>
  );
};

const limitRows: [string, string][] = [
  ['Отверстие мин.:', '0.30'],
  ['Отверстие макс.:', '8.00'],
  ['Ширина мин.:', '0.20'],
  ['Пятачок мин.:', '0.20'],
  ['Линия шелкогр.:', '0.15'],
];

const NumRow = ({ label, value, on }: { label: string; value: string; on?: boolean }) => (
  <CheckRow>
    <Box on={on} />
    {label}
    <b>
      <NumField>{value}</NumField>
      <Spin />
      <i>mm</i>
    </b>
  </CheckRow>
);

const App = () => {
  return (
    <Window>
      <Global />
      <TitleBar>
        <Ic w={16} h={20}>
          <circle cx="7" cy="6" r="5" fill="#e9a27c" />
          <circle cx="7" cy="6" r="1.800" fill="#333" />
          <rect x="5" y="10" width="4" height="9" fill="#d82020" />
          <path d="M11 5h4" stroke="#4070c0" strokeWidth="2" />
        </Ic>
        Sprint-Layout 6.0
        <WinButtons>
          <WinButton><svg width="11" height="2"><rect width="10" height="1" fill="#000" /></svg></WinButton>
          <WinButton><svg width="11" height="11"><rect x=".5" y=".5" width="10" height="10" fill="none" stroke="#000" /></svg></WinButton>
          <WinButton><svg width="11" height="11"><path d="M.5.5l10 10M10.500.5l-10 10" stroke="#000" /></svg></WinButton>
        </WinButtons>
      </TitleBar>
      <MenuBar>
        {MENU.map((m) => (
          <span key={m}><u>{m[0]}</u>{m.slice(1)}</span>
        ))}
      </MenuBar>
      <Toolbar>
        {TOOLBAR.map((n, i) =>
          n === null ? (
            <ToolSep key={i} />
          ) : (
            <ToolButton key={i} $narrow={(n as React.ReactElement).key === 'drop'}>{n}</ToolButton>
          )
        )}
        <ToolRight>
          <Ic><path d="M2 11L11 3l9 8" fill="none" stroke="#000" strokeWidth="1.600" /><rect x="1.500" y="11" width="9" height="7" rx="1" fill="#fff" stroke="#000" strokeWidth="2" /><rect x="11.500" y="11" width="9" height="7" rx="1" fill="#fff" stroke="#000" strokeWidth="2" /></Ic>
          <Ic><rect x="3" y="1" width="16" height="20" fill="#fff" stroke="#000" strokeWidth="1.400" /><path d="M5 5h12M5 9h12M5 13h12M5 17h12" stroke="#1090e0" strokeWidth="2.200" /></Ic>
          <Ic><circle cx="11" cy="11" r="8.500" fill="none" stroke="#000" strokeWidth="4" strokeDasharray="3.400 3.270" /><circle cx="11" cy="11" r="7" fill="#000" /><circle cx="11" cy="11" r="3.500" fill="#0a90e8" /></Ic>
          <Ic><rect x="3" y="1" width="16" height="20" fill="#fff" stroke="#333" /><path d="M5 5h5M5 10h5M5 15h5" stroke="#555" strokeWidth="1.500" /><path d="M12 5l2 2 3-4M12 10l2 2 3-4M12 16l2 2 3-4" fill="none" stroke="#e01010" strokeWidth="1.800" /></Ic>
          <Ic><rect x="3" y="2" width="16" height="18" rx="1" fill="#111" /><path d="M1 5h2M1 9h2M1 13h2M1 17h2M19 5h2M19 9h2M19 13h2M19 17h2" stroke="#555" /><path d="M7 9h8M7 12h8M7 15h5" stroke="#666" /></Ic>
        </ToolRight>
      </Toolbar>
      <Main>
        <LeftCol>
          <ToolRow><Ic w={16} h={18}><path d="M3 1v13l3.500-3 2.500 5 2-1-2.500-5H13z" fill="#fff" stroke="#000" strokeWidth="1.300" /></Ic>Курсор</ToolRow>
          <ToolRow><Ic w={16} h={16}><path d="M2 5V2h3M11 2h3v3M14 11v3h-3M5 14H2v-3" fill="none" stroke="#000" strokeWidth="1.800" /></Ic>Масштаб</ToolRow>
          <ToolRow><Ic w={16} h={16}><path d="M2 12c3-1 3-3 6-4l6-2" fill="none" stroke="#000" strokeWidth="3" /></Ic>Дорожка</ToolRow>
          <ToolRow $active>
            <Ic w={16} h={16}><circle cx="8" cy="8" r="7" fill="#000" /><circle cx="8" cy="8" r="2.200" fill="#fff" /></Ic>
            Пятачок
            <ToolDrop><svg width="8" height="5"><path d="M0 0h8L4 5z" fill="#222" /></svg></ToolDrop>
          </ToolRow>
          <ToolRow $gap={208}><Ic w={16} h={12}><path d="M1 3l4 4 4-4M7 10l4-7 4 7" fill="none" stroke="#000" strokeWidth="2" /></Ic>Автопуть</ToolRow>
          <ToolRow><Ic w={16} h={18}><path d="M2 2l12 14" stroke="#111" /><path d="M4 4l8 10" stroke="#d81818" strokeWidth="3.500" /></Ic>Проверка</ToolRow>
          <ToolRow><Ic w={16} h={10}><rect y="3" width="16" height="6" fill="#000" /><path d="M2 0v4M6 1v3M10 0v4M14 1v3" stroke="#000" strokeWidth="1.200" /></Ic>Линейка</ToolRow>
          <ToolRow $active>
            <Ic w={16} h={14}><path d="M1 3h4l1-2h4l1 2h4v10H1z" fill="#111" /><circle cx="9" cy="8" r="3.800" fill="#bbb" stroke="#444" /></Ic>
            Фотовид
          </ToolRow>
          <Divider $m="7px 0 0 0" />
          <GridRow>
            <Ic><rect width="22" height="22" fill="#000" /><path d="M0 5h22M0 10h22M0 15h22M0 20h22M5 0v22M10 0v22M15 0v22M20 0v22" stroke="#ddd" strokeWidth=".8" /></Ic>
            1,27 mm
          </GridRow>
          <Divider />
          <ParamRow $mt={12}>
            <ParamIcon>
              <Ic w={30} h={16}><rect x="6" y="5" width="19" height="6" fill="#000" /><path d="M15.500 0v4M15.500 12v4M13.500 2l2 2 2-2M13.500 14l2-2 2 2" fill="none" stroke="#900" /></Ic>
              <BlueDrop />
            </ParamIcon>
            <FieldLine><NumField>1.00</NumField><Spin /></FieldLine>
          </ParamRow>
          <ParamRow $mt={7} $h={31}>
            <ParamIcon>
              <Ic w={30} h={32}><path d="M9 2v8M23 2v8M9 5h14" stroke="#008000" /><circle cx="16" cy="15" r="7.500" fill="#000" /><circle cx="16" cy="15" r="2.500" fill="#fff" /><path d="M14 17v11M18 17v11" stroke="#008000" /><path d="M6 26h8M18 26h8" stroke="#900" /></Ic>
              <BlueDrop />
            </ParamIcon>
            <ParamFields>
              <FieldLine><NumField>3.75</NumField><Spin /></FieldLine>
              <FieldLine><NumField>0.00</NumField><Spin /></FieldLine>
            </ParamFields>
          </ParamRow>
          <ParamRow $mt={7} $h={31}>
            <ParamIcon>
              <Ic w={30} h={30}><rect x="6" y="11" width="12" height="16" fill="#000" /><path d="M6 3v6M18 3v6M6 6h12" stroke="#900" /><path d="M24 11v16M21 11h6M21 27h6" stroke="#900" /></Ic>
              <BlueDrop />
            </ParamIcon>
            <ParamFields>
              <FieldLine><NumField>0.50</NumField><Spin /></FieldLine>
              <FieldLine><NumField>0.50</NumField><Spin /></FieldLine>
            </ParamFields>
          </ParamRow>
          <SwapRow>
            <Ic w={20} h={12}><path d="M3 8h12V3H6M15 3h3M1 8l3-2v4zM19 3l-3-2v4z" fill="none" stroke="#000" strokeWidth="1.200" /></Ic>
          </SwapRow>
          <Divider $m="3px 0 0 0" />
          <Preview><PreviewDot /></Preview>
        </LeftCol>

        <Centre>
          <OptionsBar>
            <CameraCell>
              <Ic w={18} h={16}><path d="M1 4h4l1-2h6l1 2h4v11H1z" fill="#555" /><circle cx="9" cy="9" r="4" fill="#aaa" stroke="#333" /></Ic>
            </CameraCell>
            <OptCol $w={206} $pl={14}>
              <OptLine><Radio $on />Только стороны C1 и T1</OptLine>
              <OptLine><Radio />Только C2 и T2 (зеркально)</OptLine>
            </OptCol>
            <OptCol $w={146}>
              <OptLine><Box on />Слой шелкографии</OptLine>
              <OptLine><Box />Полупрозрачно</OptLine>
            </OptCol>
            <OptSelectCol>
              Плата:
              <SelectBox $w={77} $mt={2}>Зеленый<Chev /></SelectBox>
            </OptSelectCol>
            <OptSelectCol>
              Пайка:
              <SelectBox $w={77} $mt={2}>Золото<Chev /></SelectBox>
            </OptSelectCol>
            <OptClose>
              <SmallBtn>?</SmallBtn>
              <SmallBtn><CloseX /></SmallBtn>
            </OptClose>
          </OptionsBar>
          <RulerRow><HRuler /></RulerRow>
          <CanvasRow>
            <VRuler />
            <Board />
            <VScroll>
              <ScrollArrow><ArrowU /></ScrollArrow>
              <VThumb />
              <ScrollArrow><ArrowD /></ScrollArrow>
            </VScroll>
          </CanvasRow>
          <HScroll>
            <ScrollArrow><ArrowL /></ScrollArrow>
            <HThumb $w={119} $ml={318} />
            <ScrollArrow $ml={466}><ArrowR /></ScrollArrow>
          </HScroll>
          <TabRow><TabLabel>(Дополнение)</TabLabel></TabRow>
        </Centre>

        <Panel $w={156} $ml={1}>
          <PanelHead>Выбор элементов<HeadClose><CloseX /></HeadClose></PanelHead>
          <PinkTop>
            Тип элемента:
            <SelectBox $mt={1}>Все контакты<Chev /></SelectBox>
            <PinkLabel $mt={3}>Сортировать:</PinkLabel>
            <SelectBox $mt={1}>Мерка<Chev /></SelectBox>
            <PinkLabel $mt={4}>Слой (сторона):</PinkLabel>
            <SelectBox $mt={1}>Только фольга<Chev /></SelectBox>
          </PinkTop>
          <PinkList>
            {['1,80 mm  x 8', '2,00 mm  x 4', '2,20 mm  x 2'].map((t) => (
              <SizeRow key={t}><PlusBox>+</PlusBox><SizeText>{t}</SizeText></SizeRow>
            ))}
          </PinkList>
          <PinkCount>14 Элемента</PinkCount>
          <PinkZoom>
            Авто масштаб
            <Slider><SliderThumb /></Slider>
          </PinkZoom>
        </Panel>
        <StripDots />
        <Panel $w={122}>
          <PanelHead>Компоненты<HeadClose><CloseX /></HeadClose></PanelHead>
          <TableHead><Cell>№</Cell><Cell>Тип</Cell><Cell>Знак</Cell></TableHead>
          {[1, 2, 3, 4, 5].map((n) => (
            <TableRow key={n} $alt={n % 2 === 0}><Cell>{n}</Cell><Cell /><Cell /></TableRow>
          ))}
          <TableFill />
          <HScrollSmall>
            <ScrollArrow $w={17}><ArrowL /></ScrollArrow>
            <HThumb $w={17} $ml={0} $h={15} />
            <ScrollArrow $ml={70}><ArrowR /></ScrollArrow>
          </HScrollSmall>
          <ViewBox>
            <Ic w={100} h={9}>
              <path d="M22 4.500h58M22 4.500l4-2.500v5zM80 4.500l-4-2.500v5z" stroke="#000" strokeWidth="1" />
            </Ic>
            <ViewTitle>Просмотр:</ViewTitle>
            {['Поряд. номер', 'Слой', 'Вращение', 'Корпус', 'Комментарии'].map((t) => (
              <CheckLine key={t}><Box on />{t}</CheckLine>
            ))}
            <PlainBtn>Экспорт...</PlainBtn>
          </ViewBox>
        </Panel>
        <Panel $w={122} $ml={3} $bg="#d0d3e3">
          <PanelHead>Свойства<HeadClose><CloseX /></HeadClose></PanelHead>
          <PropTitle>Плата</PropTitle>
          <PropLabel $mt={8}>Ширина:</PropLabel>
          <PropValue><NumField $w={46}>200.00</NumField><Spin /><span>mm</span></PropValue>
          <PropLabel $mt={10}>Высота:</PropLabel>
          <PropValue><NumField $w={46}>140.00</NumField><Spin /><span>mm</span></PropValue>
          <PropLabel $mt={16} $c="#000080">{'Площадь:   280 cmI'}</PropLabel>
          <PropLabel $mt={9}>Название:</PropLabel>
          <NameInput>(Дополнение)</NameInput>
          <PropCheck><Box />Многослойная</PropCheck>
        </Panel>
        <Panel $w={208} $ml={3} $bg="#e8d0bb">
          <PanelHead>Проверка условий<HeadClose><CloseX /></HeadClose></PanelHead>
          <CheckBody>
            <Group>
              <legend>Минимальное расстояние</legend>
              <NumRow on label="Дорожки (mm):" value="0.30" />
              <NumRow on label="Отверстия (mm):" value="0.50" />
            </Group>
            <Group>
              <legend>Предельные значения</legend>
              {limitRows.map(([l, v]) => <NumRow key={l} label={l} value={v} />)}
            </Group>
            <Group>
              <legend>Дополнительно</legend>
              {['Шелкография над контактом', 'Отверстие в SMD-Контакте', 'Контакт без паяльной маски', 'Паяльная маска вне контакта'].map((t) => (
                <CheckRow key={t}><Box />{t}</CheckRow>
              ))}
            </Group>
            <RunRow>
              <RunBtn><Ic w={10} h={14}><path d="M1 1l8 6-8 6z" fill="#c0504d" stroke="#444" /></Ic>Вся плата</RunBtn>
              <RunBtn><Ic w={10} h={14}><path d="M1 1l8 6-8 6z" fill="#e8d0bb" stroke="#a04030" strokeWidth="1.500" /></Ic>Только окно</RunBtn>
            </RunRow>
            <SelectAll>Выделить все</SelectAll>
            <WhiteList />
          </CheckBody>
        </Panel>
        <StripDots />
        <Panel $w={178} $last>
          <PanelHead $c="#e84c4c">Макросы<HeadClose><CloseX /></HeadClose></PanelHead>
          <TreeBox>
            <TreeInner>
              <TreeList>
                {TREE.map((n) => (
                  <TreeRow key={n.t}>
                    {n.k === 'root' && <><PlusBox>−</PlusBox><Stub $w={5} /></>}
                    {(n.k === 'open' || n.k === 'closed') && (
                      <>
                        <Guide $w={13} $ml={4} />
                        <PlusBox>{n.k === 'open' ? '−' : '+'}</PlusBox>
                        <Stub $w={5} />
                      </>
                    )}
                    {n.k === 'leaf' && (
                      <>
                        <Guide $w={17} $ml={4} />
                        <Guide $w={18} />
                        <Stub $w={8} />
                      </>
                    )}
                    <TreeLabel $sel={n.sel}>{n.t}</TreeLabel>
                  </TreeRow>
                ))}
              </TreeList>
              <TreeScroll>
                <ScrollArrow><ArrowU /></ScrollArrow>
                <TreeThumb />
                <ScrollArrow $auto><ArrowD /></ScrollArrow>
              </TreeScroll>
            </TreeInner>
            <TreeHScroll>
              <ScrollArrow><ArrowL /></ScrollArrow>
              <HThumb $w={110} $ml={1} $h={16} />
              <ScrollArrow $ml={15}><ArrowR /></ScrollArrow>
            </TreeHScroll>
          </TreeBox>
          <AsComponent><Box on />Как компонент</AsComponent>
          <MacroTools>
            <Ic w={16} h={16}><path d="M1 1h12l2 2v12H1z" fill="#10107a" /><rect x="4" y="2" width="8" height="5" fill="#fff" /><rect x="4" y="10" width="8" height="5" fill="#9090c0" /></Ic>
            <MacroGap />
            <Ic w={14} h={16}><rect x="1" y="3" width="12" height="1.500" fill="#000" /><path d="M2.500 5h9l-1 10h-7z" fill="#555" /><path d="M5 6v8M7 6v8M9 6v8" stroke="#ddd" /><rect x="5" y="1" width="4" height="2" fill="#000" /></Ic>
            <MacroPush>
              <Ic w={16} h={16}><path d="M13.500 8a5.500 5.500 0 1 1-2-4.300" fill="none" stroke="#000" strokeWidth="2" /><path d="M9 .5l5 .5-1 5z" fill="#000" /></Ic>
              <Ic w={14} h={14}><circle cx="7" cy="7" r="7" fill="#000" /><circle cx="7" cy="7" r="2.500" fill="#e01010" /></Ic>
              <Ic w={16} h={16}><path d="M0 1h15L11 4H4z" fill="#0a90e8" /><path d="M7.500 5l5 5h-3v6h-4v-6h-3z" fill="#0a90e8" /></Ic>
              <PushLabel>Под</PushLabel>
            </MacroPush>
          </MacroTools>
          <GreyStrip />
          <PreviewBlack>
            <MacroPreview />
            <DragHint>Перетащить</DragHint>
          </PreviewBlack>
        </Panel>
      </Main>
      <StatusBar>
        <CoordBox>
          <span><i>X:</i> 86,752 mm</span>
          <span><i>Y:</i> 34,131 mm</span>
        </CoordBox>
        <LayerBox>
          <LayerName>видимы</LayerName>
          <LayerCell $c="#3a6cff">C1</LayerCell>
          <LayerCell $c="#7fe8e8">T1</LayerCell>
          <LayerCell $c="#e83020">C2</LayerCell>
          <LayerCell $c="#f0f0a8">T2</LayerCell>
          <LayerCell $c="#f8f8d8">K</LayerCell>
          <LayerHelp>?</LayerHelp>
          <LayerName $last>активен</LayerName>
          {[0, 1, 2, 3, 4].map((i) => <LayerRadio key={i}><Radio $on={i === 2} /></LayerRadio>)}
        </LayerBox>
        <SnapBox>
          <Ic w={27} h={27}><rect width="27" height="27" fill="#000" /><path d="M3 7l9 5" stroke="#1e90e0" strokeWidth="4" /><circle cx="15" cy="16" r="5.500" fill="none" stroke="#1e90e0" strokeWidth="4" /></Ic>
        </SnapBox>
        <SnapBox>
          <Ic w={27} h={27}><rect width="27" height="27" fill="#000" /><circle cx="13.500" cy="13.500" r="6" fill="none" stroke="#1e90e0" strokeWidth="4" /><path d="M13.500 2v23M2 13.500h23" stroke="#ff4040" strokeWidth="1.200" /><path d="M2 13.500h23" stroke="#ffe0c0" strokeWidth=".8" /></Ic>
        </SnapBox>
        <SnapBox>
          <Ic w={27} h={27}><rect width="27" height="27" fill="#000" /><circle cx="13.500" cy="13.500" r="6.500" fill="none" stroke="#1e90e0" strokeWidth="5" /></Ic>
        </SnapBox>
        <MessageBox><MessageText>Рисование пятачка - Выбор режима рисования</MessageText></MessageBox>
      </StatusBar>

      <PopMenu>
        {POP.map((it, i) =>
          it === null ? (
            <PopSep key={i} />
          ) : (
            <PopItem key={i}><PopIcon>{it[0]}</PopIcon>{it[1]}</PopItem>
          )
        )}
        <PopItem><PopIcon />Металлизация<PopKey>F12</PopKey></PopItem>
      </PopMenu>
    </Window>
  );
};

export default App;
